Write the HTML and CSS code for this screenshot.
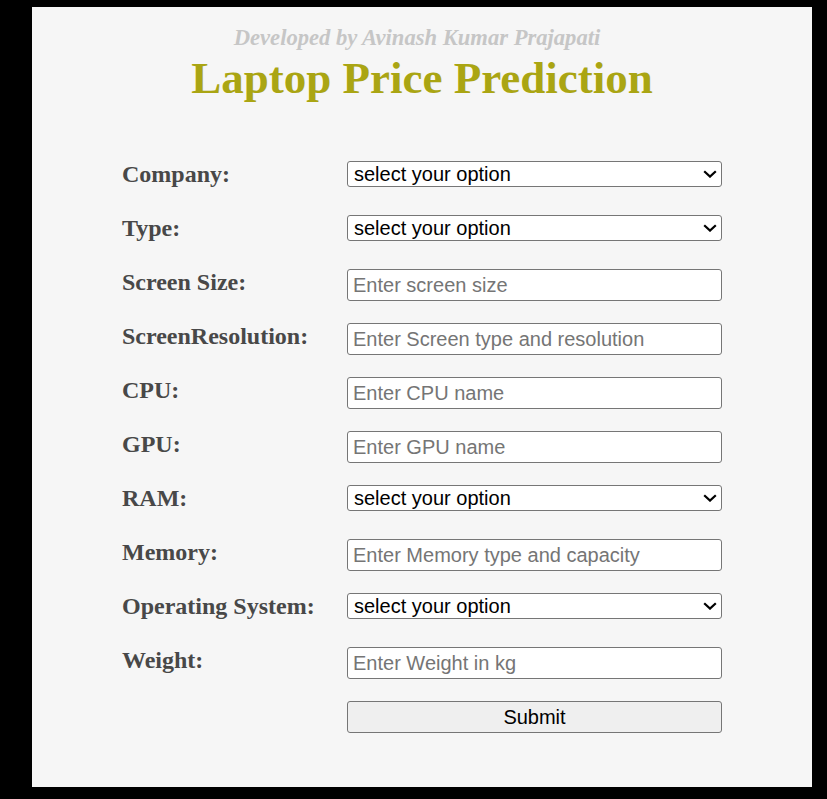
FILE: index.html
```html
<!DOCTYPE html>
<html lang="en">
<head>
<meta charset="utf-8">
<title>Laptop Price Prediction</title>
<link rel="stylesheet" href="styles.css">
</head>
<body>
<main class="panel">
  <p class="credit">Developed by Avinash Kumar Prajapati</p>
  <h1 class="title">Laptop Price Prediction</h1>
  <form class="form">
    <label class="label" for="company">Company:</label>
    <div class="select-wrap">
      <select class="field select" id="company"><option>select your option</option></select>
      <svg class="chevron" width="14" height="8" viewBox="0 0 14 8"><path d="M1.2 1.2 L7 6.6 L12.8 1.2" fill="none" stroke="#000" stroke-width="2.2"/></svg>
    </div>

    <label class="label" for="type">Type:</label>
    <div class="select-wrap">
      <select class="field select" id="type"><option>select your option</option></select>
      <svg class="chevron" width="14" height="8" viewBox="0 0 14 8"><path d="M1.2 1.2 L7 6.6 L12.8 1.2" fill="none" stroke="#000" stroke-width="2.2"/></svg>
    </div>

    <label class="label" for="size">Screen Size:</label>
    <input class="field input" id="size" type="text" placeholder="Enter screen size">

    <label class="label" for="res">ScreenResolution:</label>
    <input class="field input" id="res" type="text" placeholder="Enter Screen type and resolution">

    <label class="label" for="cpu">CPU:</label>
    <input class="field input" id="cpu" type="text" placeholder="Enter CPU name">

    <label class="label" for="gpu">GPU:</label>
    <input class="field input" id="gpu" type="text" placeholder="Enter GPU name">

    <label class="label" for="ram">RAM:</label>
    <div class="select-wrap">
      <select class="field select" id="ram"><option>select your option</option></select>
      <svg class="chevron" width="14" height="8" viewBox="0 0 14 8"><path d="M1.2 1.2 L7 6.6 L12.8 1.2" fill="none" stroke="#000" stroke-width="2.2"/></svg>
    </div>

    <label class="label" for="mem">Memory:</label>
    <input class="field input" id="mem" type="text" placeholder="Enter Memory type and capacity">

    <label class="label" for="os">Operating System:</label>
    <div class="select-wrap">
      <select class="field select" id="os"><option>select your option</option></select>
      <svg class="chevron" width="14" height="8" viewBox="0 0 14 8"><path d="M1.2 1.2 L7 6.6 L12.8 1.2" fill="none" stroke="#000" stroke-width="2.2"/></svg>
    </div>

    <label class="label" for="weight">Weight:</label>
    <input class="field input" id="weight" type="text" placeholder="Enter Weight in kg">

    <span class="spacer"></span>
    <button class="field button" type="button">Submit</button>
  </form>
</main>
</body>
</html>
```
FILE: styles.css
```css
html, body {
  background: #000;
}
body {
  margin: 7px 15px 12px 32px;
}
.panel {
  width: 780px;
  height: 780px;
  box-sizing: border-box;
  background: #f6f6f6;
  padding-top: 18px;
}
.credit {
  margin: 0;
  padding-right: 10px;
  text-align: center;
  font-family: "Liberation Serif", "Times New Roman", serif;
  font-weight: bold;
  font-style: italic;
  font-size: 22.6px;
  line-height: 25px;
  color: #c6c6c6;
}
.title {
  margin: 2px 0 0;
  text-align: center;
  font-family: "Liberation Serif", "Times New Roman", serif;
  font-weight: bold;
  font-size: 45px;
  line-height: 52px;
  color: #aaa513;
}
.form {
  margin-top: 57px;
  padding-left: 90px;
  display: grid;
  grid-template-columns: 225px 375px;
  grid-auto-rows: 32px;
  row-gap: 22px;
  align-items: start;
}
.label {
  font-family: "Liberation Serif", "Times New Roman", serif;
  font-weight: bold;
  font-size: 24px;
  line-height: 27px;
  color: #484848;
}
.field {
  box-sizing: border-box;
  width: 375px;
  margin: 0;
  font-family: "Liberation Sans", Arial, sans-serif;
  font-size: 20px;
  color: #000;
  border: 1px solid #767676;
  border-radius: 3px;
}
.select-wrap {
  position: relative;
  width: 375px;
  height: 26px;
}
.select {
  display: block;
  height: 26px;
  background: #fff;
  padding: 0 28px 0 6px;
  appearance: none;
  -webkit-appearance: none;
}
.chevron {
  position: absolute;
  top: 9px;
  right: 5px;
  pointer-events: none;
}
.input {
  height: 32px;
  background: #fff;
  padding: 0 5px;
}
.input::placeholder {
  color: #757575;
}
.button {
  height: 32px;
  background: #efefef;
  padding: 0;
}
```
